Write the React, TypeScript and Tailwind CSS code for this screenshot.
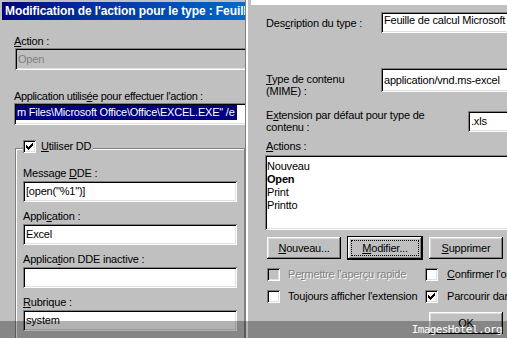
import React from 'react'

const sunken =
  'shadow-[inset_1px_1px_0_#808080,inset_-1px_-1px_0_#ffffff,inset_2px_2px_0_#000000,inset_-2px_-2px_0_#dfdfdf]'
const raised =
  'shadow-[inset_-1px_-1px_0_#000000,inset_1px_1px_0_#ffffff,inset_-2px_-2px_0_#808080,inset_2px_2px_0_#dfdfdf]'

// pixel checkmark, Win98 style (7x7)
const CHECK_ROWS = ['......X', '.....XX', 'X...XXX', 'XX.XXX.', 'XXXXX..', '.XXX...', '..X....']

function Check({ checked, disabled }: { checked?: boolean; disabled?: boolean }) {
  return (
    <span className={`relative block w-[13px] h-[13px] shrink-0 ${sunken} ${disabled ? 'bg-[#c0c0c0]' : 'bg-white'}`}>
      {checked && (
        <svg width="13" height="13" viewBox="0 0 13 13" className="absolute inset-0" shapeRendering="crispEdges">
          {CHECK_ROWS.map((row, y) =>
            row.split('').map((c, x) =>
              c === 'X' ? <rect key={`${x}-${y}`} x={3 + x} y={3 + y} width="1" height="1" fill="#000" /> : null
            )
          )}
        </svg>
      )}
    </span>
  )
}

function Field({ children, className = '' }: { children?: React.ReactNode; className?: string }) {
  return (
    <div className={`h-[21px] bg-white ${sunken} flex items-center pl-[3px] whitespace-nowrap overflow-hidden ${className}`}>
      {children}
    </div>
  )
}

function Button({ children, isDefault }: { children: React.ReactNode; isDefault?: boolean }) {
  return (
    <div
      className={`relative w-[74px] h-[22px] shrink-0 bg-[#c0c0c0] flex items-center justify-center ${
        isDefault
          ? 'shadow-[0_0_0_1px_#000000,inset_-1px_-1px_0_#000000,inset_1px_1px_0_#ffffff,inset_-2px_-2px_0_#808080,inset_2px_2px_0_#dfdfdf]'
          : raised
      }`}
    >
      {children}
      {/* focus rectangle */}
      {isDefault && <span className="absolute inset-[3px] border border-dotted border-black" />}
    </div>
  )
}

export default function App() {
  return (
    <div className="relative w-[507px] h-[338px] overflow-hidden bg-white flex text-[11px] leading-[13px] tracking-[-0.2px] text-black font-['Liberation_Sans',Arial,sans-serif]">
      {/* Left dialog: action editor */}
      <div className="w-[246px] h-full bg-[#c0c0c0] border-r border-[#808080] overflow-hidden shrink-0 pt-[2px]">
        <div className="ml-[2px] w-[260px] h-[18px] bg-gradient-to-r from-[#000080] to-[#0f70d0] text-white font-bold text-[12px] leading-[18px] tracking-[-0.1px] pl-[3px] whitespace-nowrap overflow-hidden">
          Modification de l'action pour le type : Feuille de calcul Microsoft Excel
        </div>

        <div className="ml-[14px] mt-[15px]">
          <u>A</u>ction :
        </div>
        <div className={`ml-[15px] w-[240px] h-[22px] bg-[#c0c0c0] ${sunken} flex items-center pl-[3px] text-[#808080]`}>
          Open
        </div>

        <div className="ml-[14px] mt-[20px] whitespace-nowrap tracking-[-0.35px]">
          Application utilis<u>é</u>e pour effectuer l'action :
        </div>
        <div className={`ml-[14px] w-[240px] h-[22px] bg-white ${sunken} pt-[2px] pl-[2px] overflow-hidden whitespace-nowrap`}>
          <span className="inline-block bg-[#000080] text-white leading-[15px] pl-[1px] pr-[2px]">
            m Files\Microsoft Office\Office\EXCEL.EXE" /e
          </span>
        </div>

        {/* DDE group box */}
        <div className="relative ml-[15px] mt-[23px] w-[230px] h-[200px] border border-[#808080] shadow-[inset_1px_1px_0_#ffffff,1px_1px_0_#ffffff] pt-[18px] pl-[7px]">
          <div className="absolute top-[-9px] left-[7px] bg-[#c0c0c0] pr-[2px] flex items-center gap-[5px]">
            <Check checked />
            <span>
              <u>U</u>tiliser DD
            </span>
          </div>

          <div>
            Message <u>D</u>DE :
          </div>
          <Field className="w-[214px] mt-[1px]">[open("%1")]</Field>

          <div className="mt-[8px]">
            Appli<u>c</u>ation :
          </div>
          <Field className="w-[214px] mt-[1px]">Excel</Field>

          <div className="mt-[8px]">
            Applica<u>t</u>ion DDE inactive :
          </div>
          <Field className="w-[214px] mt-[1px]" />

          <div className="mt-[8px]">
            <u>R</u>ubrique :
          </div>
          <Field className="w-[214px] mt-[1px]">system</Field>
        </div>
      </div>

      {/* separator */}
      <div className="w-[5px] h-full shrink-0 border-l-2 border-white bg-[#c0c0c0]" />

      {/* Right dialog: file type */}
      <div className="w-[256px] h-full shrink-0 bg-white pt-[5px]">
        <div className="h-full bg-[#c0c0c0] pl-[15px] overflow-hidden">
          <div className="flex mt-[7px]">
            <div className="w-[115px] shrink-0 pt-[5px] whitespace-nowrap">
              Des<u>c</u>ription du type :
            </div>
            <Field className="w-[140px] shrink-0 items-start pt-[2px]">Feuille de calcul Microsoft Excel</Field>
          </div>

          <div className="flex mt-[35px]">
            <div className="w-[115px] shrink-0 pt-[5px] leading-[12px]">
              <u>T</u>ype de contenu
              <br />
              (MIME) :
            </div>
            <Field className="w-[140px] shrink-0 h-[24px]">application/vnd.ms-excel</Field>
          </div>

          <div className="flex mt-[12px]">
            <div className="w-[202px] shrink-0 leading-[12px] whitespace-nowrap">
              E<u>x</u>tension par défaut pour type de
              <br />
              contenu :
            </div>
            <Field className="w-[60px] shrink-0 mt-[2px]">.xls</Field>
          </div>

          <div className="mt-[7px]">
            <u>A</u>ctions :
          </div>
          <div className={`ml-[-1px] mt-[2px] w-[260px] h-[75px] bg-white ${sunken} pt-[5px] pl-[2px]`}>
            <div>Nouveau</div>
            <div className="font-bold">Open</div>
            <div>Print</div>
            <div>Printto</div>
          </div>

          <div className="flex gap-[7px] mt-[7px] ml-[1px]">
            <Button>
              <span>
                <u>N</u>ouveau...
              </span>
            </Button>
            <Button isDefault>
              <span>
                <u>M</u>odifier...
              </span>
            </Button>
            <Button>
              <span>
                <u>S</u>upprimer
              </span>
            </Button>
          </div>

          <div className="flex mt-[9px] ml-[1px] whitespace-nowrap">
            <div className="w-[158px] shrink-0 flex items-center gap-[8px]">
              <Check disabled />
              <span className="text-[#808080] [text-shadow:1px_1px_0_#ffffff]">
                Pe<u>r</u>mettre l'aperçu rapide
              </span>
            </div>
            <div className="flex items-center gap-[9px]">
              <Check />
              <span>
                <u>C</u>onfirmer l'ouverture après le téléchargement
              </span>
            </div>
          </div>

          <div className="flex mt-[9px] ml-[1px] whitespace-nowrap">
            <div className="w-[158px] shrink-0 flex items-center gap-[8px]">
              <Check />
              <span>
                Tou<u>j</u>ours afficher l'extension
              </span>
            </div>
            <div className="flex items-center gap-[9px]">
              <Check checked />
              <span>Parcourir dans la même fenêtre</span>
            </div>
          </div>

          <div className="mt-[9px] ml-[163px]">
            <Button>OK</Button>
          </div>
        </div>
      </div>

      {/* watermark bar */}
      <div className="absolute inset-x-0 bottom-0 h-[17px] bg-black/30 flex items-center justify-end pr-[5px]">
        <span className="text-white text-[11px] leading-[13px] tracking-[-0.6px] font-['DejaVu_Sans_Mono',monospace]">
          ImagesHotel.org
        </span>
      </div>
    </div>
  )
}
